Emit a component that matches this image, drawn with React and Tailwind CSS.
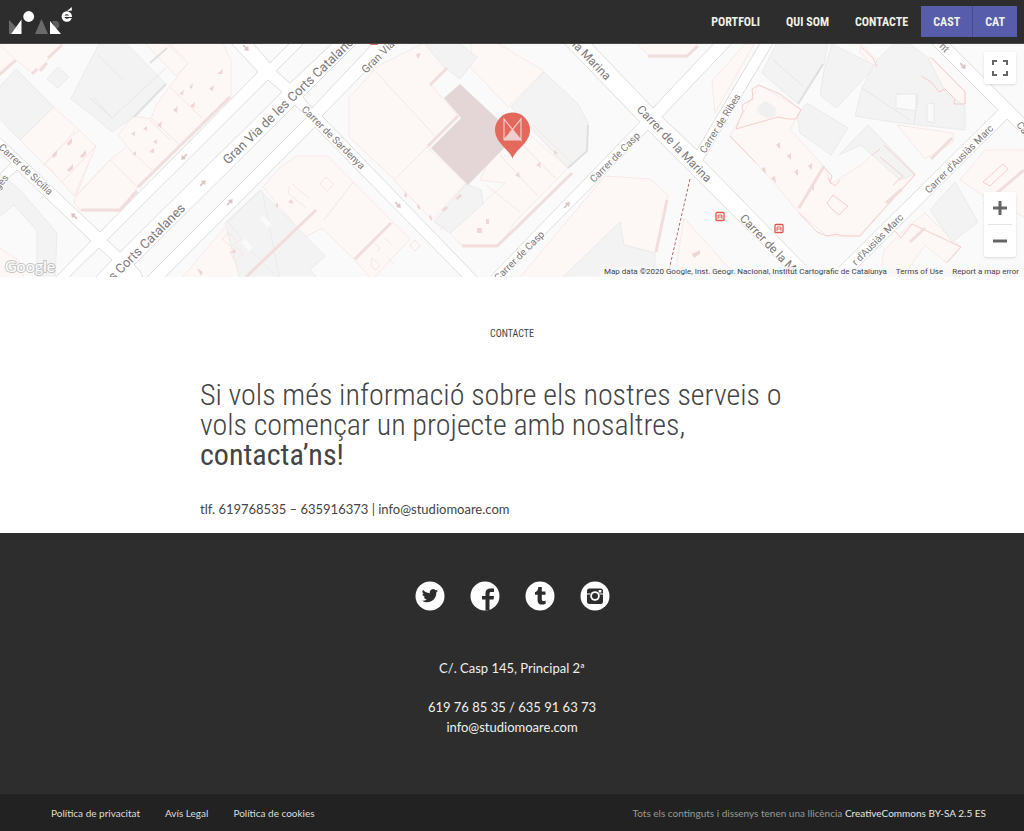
import React from 'react';

const blocks = [
  '-5,133 100,232 258,72 232,44 228,40 -5,40',
  '17,170 91,241 53,280 -5,280 -5,191',
  '-5,148 11,163 -5,179',
  '99,248 112,260 93,280 66,280',
  '107,240 268,80 282,92 120,252',
  '134,265 295,105 307,117 144,280 140,271',
  '276,71 307,40 336,40 290,83',
  '303,97 360,40 376,40 312,108',
  '250,40 270,63 293,40',
  '315,127 465,280 162,280',
  '322,116 396,40 561,40 640,122 490,277 486,286',
  '648,130 500,280 798,280',
  '588,40 653,108 717,40',
  '662,117 735,40 762,40 697,150',
  '703,160 820,280 826,280 998,110 928,40 775,40',
  '1007,119 845,280 1030,280 1030,141',
  '946,40 1030,124 1030,40',
];

const pinkBuildings = [
  '-5,75 16,59 -5,40', '15,59 33,74 47,61 63,44 60,40 -5,40',
  '54,107 79,130 95,147 76,196 20,140',
  '79,130 96,146 74,196 45,163', '76,196 110,160 138,187 120,211 81,211 74,203',
  '118,135 133,116 151,119 157,104 170,86 188,63 170,44 222,42 231,60 231,97 138,187 110,160 127,146',
  '146,44 163,40 188,63 176,76',
  '349,98 378,66 430,40 448,66 430,84 458,116 427,147 395,180 349,137',
  '427,147 466,183 432,220 394,180',
  '263,187 279,168 297,156 328,156 353,182 393,222 355,260 322,228 305,237',
  '393,222 410,239 372,280 355,260',
  '180,280 226,226 280,280', '-5,245 18,260 25,280 -5,280',
  '471,44 492,40 544,71 508,107 471,68',
  '508,116 568,168 515,222 500,245 461,245 450,233 505,183 480,180',
  '573,214 605,176 650,179 668,195 655,253 619,244 620,222 560,280 518,280 545,247',
  '637,44 650,57 687,57 700,40 640,40', '712,81 745,44 754,44 715,113',
  '684,218 740,280 674,280', '759,85 801,109 790,130 799,139 825,168 831,184 861,165 885,143 915,174 872,223 858,236 827,236 799,213 776,185 756,163 730,136',
  '897,125 953,133 953,142 925,159', '930,57 965,91 965,104 953,104 942,92 920,73',
  '861,44 880,63 874,68 860,52',
  '960,180 985,150 1024,150 1030,220 990,200', '880,280 884,250 911,224 925,213 960,247 946,263 925,245 900,280',
];

const grayBuildings = [
  '-5,92 16,69 54,107 20,140 -5,114', '47,79 58,67 69,77 58,88',
  '85,71 99,44 125,42 166,84 134,117 112,132 92,115 71,99',
  '-5,220 14,205 37,231 37,280 55,280 57,233 20,190 -5,170',
  '225,223 260,190 325,256 310,270 320,280 240,280',
  '425,44 455,40 477,57 460,79 443,66',
  '511,107 544,72 578,104 588,123 587,151 568,168',
  '434,222 466,184 481,190 483,204 450,233',
  '620,222 624,245 655,253 655,280 560,280',
  '762,73 776,44 828,42 824,64 798,104', '824,70 832,44 876,66 836,108 820,95',
  '877,60 893,44 910,44 928,58 946,93 965,106 965,130 892,122 855,116 862,88',
  '797,115 807,103 848,128 831,155 800,133', '839,155 868,125 915,174 900,180 861,145',
  '930,210 955,182 978,222 952,242', '228,222 245,205 262,190 280,280 246,245',
];

const shadows = [
  'M-2 76L16 60', 'M32 74L37 69M40 71L47 63', 'M48 58L62 45', 'M138 187L230 97', 'M81 210H120L137 191',
  'M355 259L391 223', 'M428 146L458 116', 'M430 85L447 68', 'M462 246H497L515 229', 'M515 229L572 173',
  'M648 56H687L698 46', 'M246 277L316 210', 'M656 252L667 200', 'M799 208L824 166', 'M886 203L902 189',
  'M931 159L952 138', 'M984 204L1024 170', 'M910 242L925 228',
];

const courtyards = [
  'M52 155l5-5v5l-4 3zM67 143l5-5v5l-4 3zM67 170l6-6v5l-4 3zM80 156l6-6v5l-4 3z',
  'M157 125l5-4-1 7zM173 110l5-4-1 7zM179 94l5-4-1 5zM189 87l4-4-1 6zM190 106l5-4-1 6zM217 74l6-5-1 5zM209 89l5-4-1 6z',
  'M131 134l4-3v5zM143 129l4-3v5zM153 142l4-3v5zM149 152l5-4v5zM132 154l4-3v5z',
  'M416 54l5-1-3 6zM405 192l2 3v3l-3-2zM418 203l2 4v3l-3-3zM430 214l2 4v3l-3-3zM442 210l4-4 2 2-5 4z',
  'M456 198l4-4 2 2-5 4zM477 228h5v5h-5zM486 219h3v5h-3zM515 175l4-3 1 6zM536 165l4-3 1 6zM554 150l4 3-4 2zM692 254l8-4v4l-6 4z',
  'M776 145l4-3v7zM787 156l4-3v7zM794 172l4-3v7zM808 166l4-3v7zM761 169l4-2 1 7zM771 178l4-2 1 7zM810 187l4-3v7z',
  'M288 202l4-3 1 5zM275 205l3-2v5zM197 268l6 4-2 4zM230 253l5-4 1 4z',
];

const outlines = [
  'M320 184l6-7 8 7-7 7zM292 184l18 15M290 186l-2 7 18 15M353 182l-29 38M376 72l60 65',
  'M410 245l5-5 5 6-5 5zM440 230l5-5M372 258l5 4 3 4-5 4-4-5zM385 238l7 7M374 243l6 5-3 4M388 258l6 6',
  'M222 239l7-6 9 8-7 6zM230 252l6-5 7 7-8 7z',
  'M75 131L43 166M96 146L62 182M110 160L76 196M150 120L170 140M170 87L202 118M152 119L180 145M128 148L152 170',
  'M533 125L572 163M513 135L555 178M500 155L537 195M486 185L520 212',
];

const strongOutlines = [
  'M759 85l21 9 21 16-5 9-8 0-10-2-42 12 7-18-1-6 11-6-1-10zM730 136l26 27',
  'M824 167l8 9-2 6 5 4 5-6M799 213l18 19 10 4 10-2 5 2h18l15-17M831 184l-3-6',
  'M827 203l6-8 9 7 6 4-9 9-7-6zM884 145l31 30-43 47M880 157l23 19-10 9M872 155l8-6',
  'M932 58l33 34v12l-11 0 1-5-10-10-6 3-8-10-10-6M861 47l12 11 4 9',
  'M912 224l49 23-14 16M894 230l7 8 11-14M983 182l20-18 5 5-18 17z',
];

const labels = [
  ['Gran Via de les Corts Catalane', 228, 165, -44, 13, 'start'],
  ['s Corts Catalanes', 186, 209, -45, 13, 'end'],
  ['Gran Via d', 366, 74, -45, 11, 'start'],
  ['Carrer de Sardenya', 301, 110, 45, 10, 'start'],
  ['Carrer de Sicília', -2, 148, 43, 10, 'start'],
  ['la Marina', 606, 81, 46, 12, 'end'],
  ['Carrer de la Marina', 636, 110, 46, 12, 'start'],
  ['Carrer de la M', 739, 219, 46, 12, 'start'],
  ['Carrer de Casp', 594, 183, -45, 10, 'start'],
  ['Carrer de Casp', 545, 235, -45, 10, 'end'],
  ['Carrer de Ribes', 705, 154, -58, 10, 'start'],
  ["Carrer d'Ausiàs Marc", 929, 194, -45, 10, 'start'],
  ["r d'Ausiàs Marc", 904, 218, -45, 10, 'end'],
  ['Ca', 1016, 125, 52, 10, 'start'],
  ['nt', 945, 53, 46, 10, 'end'],
  ['ges', 9, 178, -50, 10, 'end'],
];

const arrows = [
  [184, 157, 135], [203, 183, -45], [230, 202, -45], [74, 216, 222], [246, 48, 46], [398, 205, 46], [567, 205, -46], [963, 66, 46],
];

function StreetMap() {
  return (
    <svg viewBox="0 44 1024 233" preserveAspectRatio="xMidYMid slice" className="block h-full w-full" aria-label="Map" role="img">
      <rect x="-500" y="0" width="2024" height="400" fill="#fff" />
      {blocks.map((p) => <polygon key={p} points={p} fill="#fafafa" stroke="#dedede" />)}
      {pinkBuildings.map((p) => <polygon key={p} points={p} fill="#fdf8f6" stroke="#f9e9e6" />)}
      {grayBuildings.map((p) => <polygon key={p} points={p} fill="#f3f3f3" stroke="#ebebeb" />)}
      <path d="M90 98l22 20 54-50M98 55l25 25M112 118l-18-20M134 117l32-32M773 60l30 26M862 88l48 32M896 94l22 1-4 29" fill="none" stroke="#e7e7e7" />
      <path d="M134 117L166 84M568 168l19-17 1-26M798 104l25-40M150 63l17-15" fill="none" stroke="#e0e0e0" strokeWidth="2" />
      <path d="M896 94h20v17l-20-3zM927 104l7-1v20l-7-2z" fill="#fafafa" stroke="#e8e8e8" />
      <path d="M758 106l8-5 10 7-1 8-6 3-12-7z" fill="#f0f0f0" />
      <path d="M260 219l4-3 8 9-4 3zM241 242l4-3 8 9-4 3z" fill="#fafafa" />
      {outlines.map((d) => <path key={d} d={d} fill="none" stroke="#f8e5e2" />)}
      {strongOutlines.map((d) => <path key={d} d={d} fill="none" stroke="#f5cfcb" />)}
      {courtyards.map((d) => <path key={d} d={d} fill="#eed6d4" />)}
      {shadows.map((d) => <path key={d} d={d} fill="none" stroke="#f1dedc" strokeWidth="3" />)}
      <path d="M460 84L505 126V147L468 185L431 148L461 118L444 98Z" fill="#e4d5d6" />
      <path d="M690 179L669 270" fill="none" stroke="#a86b69" strokeDasharray="3 2" />
      {arrows.map(([x, y, a]) => (
        <g key={x} transform={`translate(${x} ${y}) rotate(${a})`}>
          <path d="M-4 0H1" stroke="#dcc3c2" strokeWidth="1.6" />
          <path d="M0-3L4 0L0 3Z" fill="#dcc3c2" />
        </g>
      ))}
      {[[720, 216.5], [779, 228.5]].map(([x, y]) => (
        <g key={x} transform={`translate(${x} ${y})`}>
          <rect x="-4" y="-4" width="8" height="8" rx="1" fill="#fff" stroke="#e2554b" strokeWidth="1.3" />
          <path d="M-2 2.500V-1.500H2V2.500M-2 .5H2" fill="none" stroke="#e2655c" />
        </g>
      ))}
      <rect x="370" y="40" width="8" height="5" rx="1" fill="#e06a62" />
      <g fill="#7d7777" stroke="#fff" strokeWidth="2" paintOrder="stroke" className="font-['Roboto',sans-serif]">
        {labels.map(([t, x, y, a, s, anchor]) => (
          <text key={`${t}${x}`} transform={`translate(${x} ${y}) rotate(${a})`} fontSize={s} textAnchor={anchor}>{t}</text>
        ))}
      </g>
      <path d="M512.500 158.500C509 149 495 143 495 130A17.500 17.500 0 0 1 530 130C530 143 516 149 512.500 158.500Z" fill="#e4685c" />
      <path d="M504 140V119L521 140V119L504 140" fill="none" stroke="#f2c9c6" strokeWidth="1.200" />
      <path d="M503.500 140.500L512.500 130L521.500 140.500Z" fill="#eccfce" />
    </svg>
  );
}

function Logo() {
  return (
    <svg viewBox="0 0 66 30" className="block h-[30px] w-[66px]" aria-hidden="true">
      <path d="M1 13L8 20L3 27H1Z" fill="#6a6a6a" />
      <path d="M3 27L13.500 12.500V27Z" fill="#fff" />
      <circle cx="20.700" cy="9.500" r="5.400" fill="#fff" />
      <path d="M33.500 12L40 27H27Z" fill="#6a6a6a" />
      <path d="M44 14H49A4.500 4.500 0 0 1 49 22L47 21Z" fill="#5e5e5e" />
      <path d="M42 14L53 27H42Z" fill="#fff" />
      <circle cx="58.800" cy="9.500" r="5.200" fill="#fff" />
      <path d="M56.500 8.500A2.500 2 0 0 1 61 8.500ZM56.500 10H64.500V11H61A2.500 2 0 0 1 56.500 10Z" fill="#2d2d2d" />
      <path d="M59 4L63.800 0V3.500Z" fill="#fff" />
    </svg>
  );
}

const socials = [
  ['Twitter', <path key="t" fill="#2d2d2d" d="M23 9.700a7 7 0 0 1-1.900.5 3.200 3.200 0 0 0 1.400-1.800 6.500 6.500 0 0 1-2 .8 3.300 3.300 0 0 0-5.700 3A9.300 9.300 0 0 1 8 8.800a3.300 3.300 0 0 0 1 4.400 3.200 3.200 0 0 1-1.500-.4c0 1.600 1.200 2.900 2.700 3.200a3.200 3.200 0 0 1-1.500.1 3.300 3.300 0 0 0 3.100 2.300A6.600 6.600 0 0 1 7 19.700a9.300 9.300 0 0 0 14.300-8.300 6.400 6.400 0 0 0 1.700-1.700z" />],
  ['Facebook', <path key="f" fill="#2d2d2d" d="M15.500 29.500V18.500H12V15H15.500V12C15.500 9 17.300 7.500 20.500 7.500H24V11H21.500C20 11 19.500 11.500 19.500 12.800V15H24L23.500 18.500H19.500V29Z" />],
  ['Tumblr', <path key="u" fill="#2d2d2d" d="M13.300 6H16.800V10.500H20.500V13.700H16.800V18C16.800 19.500 17.400 20 18.500 20C19.200 20 19.800 19.800 20.600 19.400V22.800C19.500 23.400 18.200 23.600 17 23.600C14 23.600 12.600 22 12.600 19.400V13.700H10V11.200C12.200 10.600 13 9 13.300 6Z" />],
  ['Instagram', (
    <g key="i">
      <rect x="7" y="7.500" width="16" height="15.500" rx="2.500" fill="#2d2d2d" />
      <path d="M7 13H10.500M19.500 13H23" stroke="#fff" strokeWidth="1.200" />
      <circle cx="15" cy="15" r="4.800" fill="#fff" />
      <circle cx="15" cy="15" r="3" fill="#2d2d2d" />
      <rect x="18.700" y="9" width="2.700" height="2.500" fill="#fff" />
    </g>
  )],
];

export default function App() {
  return (
    <div className="bg-white font-['Lato',sans-serif] text-[#444]">
      <header className="flex h-11 items-center justify-between border-b border-[#4a4545] bg-[#2d2d2d] pr-[7px] pl-2">
        <a href="#" aria-label="Moaré"><Logo /></a>
        <nav className="flex items-center font-['Roboto_Condensed','Liberation_Sans_Narrow','Roboto',sans-serif] text-[12px] font-bold text-[#f0f0e6]">
          <a href="#portfoli" className="px-[13px]">PORTFOLI</a>
          <a href="#qui-som" className="px-[13px]">QUI SOM</a>
          <a href="#contacte" className="px-[13px]">CONTACTE</a>
          <a href="#cast" className="flex h-[31px] items-center border-r border-[#474b8c] bg-[#575daa] px-3">CAST</a>
          <a href="#cat" className="flex h-[31px] items-center bg-[#575daa] px-3">CAT</a>
        </nav>
      </header>

      <section className="relative h-[233px] overflow-hidden">
        <StreetMap />
        <button aria-label="Toggle fullscreen view" className="absolute top-2 right-2 flex size-8 items-center justify-center rounded-xs bg-white shadow">
          <svg viewBox="0 0 16 16" className="size-4" fill="none" stroke="#666" strokeWidth="2"><path d="M1 5V1H5M11 1H15V5M15 11V15H11M5 15H1V11" /></svg>
        </button>
        <div className="absolute right-2 bottom-5 flex w-8 flex-col items-center rounded-xs bg-white shadow">
          <button aria-label="Zoom in" className="flex h-8 w-8 items-center justify-center">
            <svg viewBox="0 0 16 16" className="size-4" stroke="#666" strokeWidth="3"><path d="M1 8H15M8 1V15" /></svg>
          </button>
          <div className="h-px w-6 bg-[#e6e6e6]" />
          <button aria-label="Zoom out" className="flex h-8 w-8 items-center justify-center">
            <svg viewBox="0 0 16 16" className="size-4" stroke="#666" strokeWidth="3"><path d="M1 8H15" /></svg>
          </button>
        </div>
        <svg viewBox="0 0 54 20" className="absolute bottom-0 left-1 h-5 w-[54px]" aria-label="Google">
          <text x="1" y="15" fontSize="16" fill="#fff" stroke="#c4c4c4" strokeWidth="2" paintOrder="stroke" className="font-['Lato',sans-serif]">Google</text>
        </svg>
        <div className="absolute right-0 bottom-0 flex h-[10px] items-center gap-[9px] bg-[#f8f8f8]/80 pr-[5px] pl-1 font-['Roboto',sans-serif] text-[8px] leading-[10px] text-[#444]">
          <span>Map data ©2020 Google, Inst. Geogr. Nacional, Institut Cartografic de Catalunya</span>
          <a href="#terms">Terms of Use</a>
          <a href="#report">Report a map error</a>
        </div>
      </section>

      <main className="px-4 pt-12">
        <h2 className="text-center font-['Roboto_Condensed','Liberation_Sans_Narrow','Roboto',sans-serif] text-[10px] leading-[18px]">CONTACTE</h2>
        <div className="mx-auto max-w-[624px]">
          <p className="mt-[37px] font-['Roboto_Condensed','Liberation_Sans_Narrow','Roboto',sans-serif] text-[30px] leading-[30px] font-light">
            Si vols més informació sobre els nostres serveis o vols començar un projecte amb nosaltres, <strong className="block font-normal">contacta’ns!</strong>
          </p>
          <p className="mt-[29px] pb-[14px] text-[13px] leading-5">tlf. 619768535 – 635916373 | info@studiomoare.com</p>
        </div>
      </main>

      <footer className="bg-[#2d2d2d] text-center text-[13px] leading-5 text-[#f0f0f0]">
        <div className="flex justify-center gap-[25px] pt-12">
          {socials.map(([name, icon]) => (
            <a key={name} href={`#${name.toLowerCase()}`} aria-label={name}>
              <svg viewBox="0 0 30 30" className="block size-[30px]"><circle cx="15" cy="15" r="14.500" fill="#fff" />{icon}</svg>
            </a>
          ))}
        </div>
        <p className="pt-[47px]">C/. Casp 145, Principal 2ª</p>
        <p className="pt-[19px]">619 76 85 35 / 635 91 63 73</p>
        <p className="pb-[57px]"><a href="mailto:info@studiomoare.com">info@studiomoare.com</a></p>
        <div className="flex h-[37px] items-center justify-between bg-[#222] pr-[38px] pl-[51px] text-[10px] text-[#ddd]">
          <nav className="flex gap-[25px]">
            <a href="#privacitat">Política de privacitat</a>
            <a href="#legal">Avís Legal</a>
            <a href="#cookies">Política de cookies</a>
          </nav>
          <p className="text-[#999]">Tots els continguts i dissenys tenen una llicència <a href="#llicencia" className="text-[#e6e6e6]">CreativeCommons BY-SA 2.5 ES</a></p>
        </div>
      </footer>
    </div>
  );
}
